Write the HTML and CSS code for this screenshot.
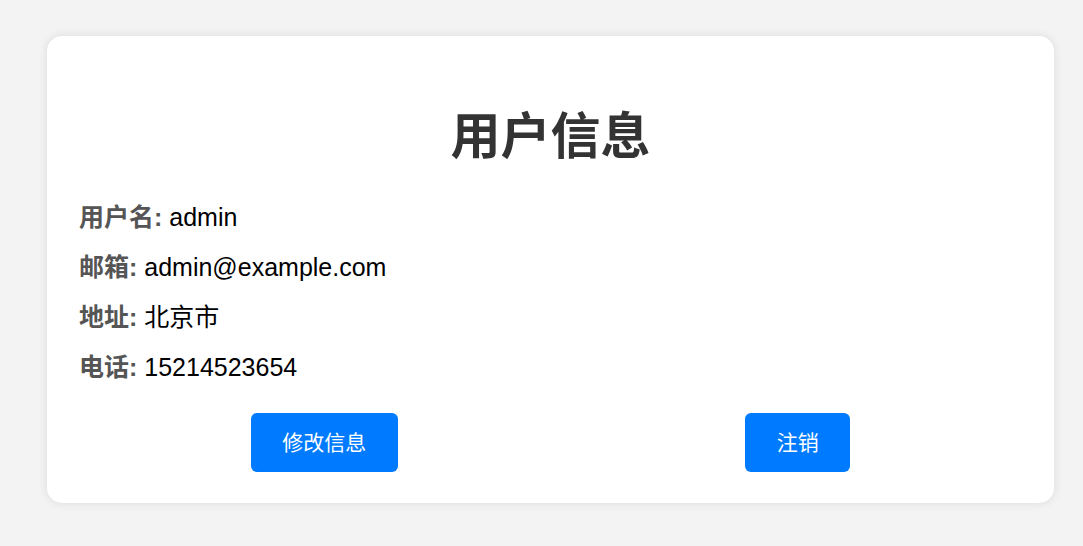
FILE: index.html
```html
<!DOCTYPE html>
<html lang="zh">
<head>
<meta charset="utf-8">
<title>用户信息</title>
<link rel="stylesheet" href="styles.css">
</head>
<body>
<div class="card">
  <h1 class="title">用户信息</h1>
  <div class="info">
    <p class="row"><span class="label">用户名:</span> admin</p>
    <p class="row"><span class="label">邮箱:</span> admin@example.com</p>
    <p class="row"><span class="label">地址:</span> 北京市</p>
    <p class="row"><span class="label">电话:</span> 15214523654</p>
  </div>
  <div class="actions">
    <button class="btn">修改信息</button>
    <button class="btn">注销</button>
  </div>
</div>
</body>
</html>
```
FILE: styles.css
```css
html, body {
  margin: 0;
  padding: 0;
}
body {
  background: #f3f3f3;
  font-family: "Liberation Sans", Arial, "Noto Sans CJK SC", sans-serif;
  padding: 36px 0 43px 47px;
}
.card {
  width: 1007px;
  box-sizing: border-box;
  background: #fff;
  border-radius: 15px;
  box-shadow: 0 0 10px rgba(0, 0, 0, 0.1);
  padding: 71px 30px 31px;
}
.title {
  margin: 0;
  font-size: 50px;
  line-height: 60px;
  text-align: center;
  color: #333;
  font-weight: bold;
}
.info {
  display: flex;
  flex-direction: column;
  gap: 20px;
  margin-top: 35px;
  padding-left: 2px;
}
.row {
  margin: 0;
  font-size: 25px;
  line-height: 30px;
  color: #000;
}
.label {
  font-weight: bold;
  color: #555;
}
.actions {
  display: flex;
  justify-content: space-around;
  margin-top: 31px;
}
.btn {
  background: #007bff;
  color: #fff;
  border: none;
  border-radius: 6px;
  font-family: "Liberation Sans", Arial, "Noto Sans CJK SC", sans-serif;
  font-size: 21px;
  line-height: 29px;
  padding: 15px 31.5px;
  cursor: pointer;
}
```
